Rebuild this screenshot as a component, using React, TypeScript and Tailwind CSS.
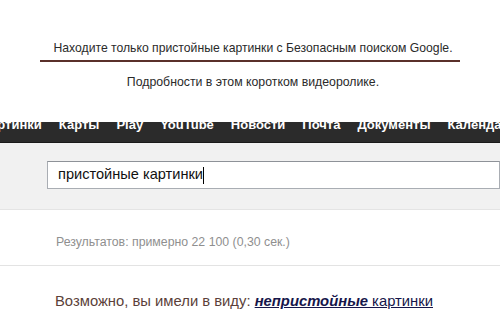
import React from 'react'

const NAV = ['Картинки', 'Карты', 'Play', 'YouTube', 'Новости', 'Почта', 'Документы', 'Календарь']

export default function App() {
  return (
    <div className="w-[500px] h-[336px] overflow-hidden bg-white font-['Liberation_Sans',Arial,sans-serif]">
      <div className="h-[122px] flex flex-col items-center pt-[41px]">
        <p className="text-[12.2px] leading-[14px] text-[#2a2a2a] pl-[6px]">
          Находите только пристойные картинки с Безопасным поиском Google.
        </p>
        <div className="mt-[5px] w-[420px] h-[2px] bg-[#5a302a]" />
        <p className="mt-[13px] text-[12.3px] leading-[14px] text-[#2a2a2a] pl-[6px]">
          Подробности в этом коротком видеоролике.
        </p>
      </div>

      <div className="h-[21px] bg-[#2b2b2b] border-b border-[#1a1a1a] overflow-hidden">
        <div className="flex whitespace-nowrap -mt-[6px] -ml-[35px] text-[13px] leading-[18px] font-bold text-white">
          {NAV.map(n => (
            <span key={n} className="pl-[17px]">{n}</span>
          ))}
        </div>
      </div>

      <div className="h-[67px] bg-[#f1f1f1] border-b border-[#e4e4e4] pt-[18px] pl-[47px]">
        <div className="h-[28px] bg-white border border-[#a9adb3] border-t-[#8e9298] flex items-center pl-[10px]">
          <span className="text-[14.6px] text-[#111]">пристойные картинки</span>
          <span className="w-px h-[17px] bg-black" />
        </div>
      </div>

      <div className="pl-[56px] pt-[25px] pb-[16px] border-b border-[#e3e3e3]">
        <p className="text-[12.3px] leading-[14px] text-[#8f8f8f]">Результатов: примерно 22 100 (0,30 сек.)</p>
      </div>

      <div className="pl-[55px] pt-[25px]">
        <p className="text-[14.8px] leading-[20px] text-[#5b3f3a]">
          Возможно, вы имели в виду:{' '}
          <span className="underline text-[#16164a]">
            <b className="italic">непристойные</b> картинки
          </span>
        </p>
      </div>
    </div>
  )
}
